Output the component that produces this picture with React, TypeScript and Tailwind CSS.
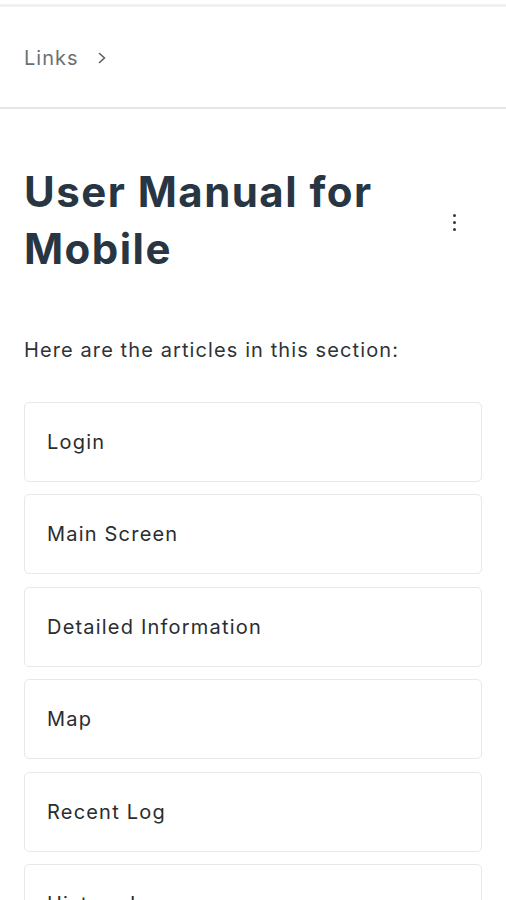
import React from "react";

const items = ["Login", "Main Screen", "Detailed Information", "Map", "Recent Log", "History Log"];

export default function App() {
  return (
    <div className="w-[506px] h-[900px] overflow-hidden bg-white" style={{ fontFamily: "Inter, 'Noto Sans', sans-serif" }}>
      <div className="h-[8px] pt-[4px]">
        <div className="h-[3px] bg-[#f1f1f1]" />
      </div>
      <div className="h-[101px] flex items-center px-6 border-b-2 border-[#e6e6e6]">
        <span className="text-[20px] tracking-[0.05em] text-[#6b7075]">Links</span>
        <svg className="ml-[17px] mt-[1px]" width="12" height="14" viewBox="0 0 12 14" fill="none">
          <path d="M3.5 2.5L8.5 7L3.5 11.5" stroke="#5a5f64" strokeWidth="1.6" strokeLinecap="round" strokeLinejoin="round" />
        </svg>
      </div>
      <div className="px-6 pt-[54px]">
        <div className="flex items-center justify-between">
          <h1 className="text-[42px] leading-[57px] font-bold text-[#283643] tracking-[0.035em]">
            User Manual for
            <br />
            Mobile
          </h1>
          <div className="flex flex-col gap-[4px] mr-[26px] mt-[4px]">
            <span className="w-[3px] h-[3px] rounded-full bg-[#2f3a44]" />
            <span className="w-[3px] h-[3px] rounded-full bg-[#2f3a44]" />
            <span className="w-[3px] h-[3px] rounded-full bg-[#2f3a44]" />
          </div>
        </div>
        <p className="mt-[59px] text-[20px] leading-[28px] tracking-[0.055em] text-[#2f3337]">Here are the articles in this section:</p>
        <div className="mt-[38px] flex flex-col gap-[12.4px]">
          {items.map((t) => (
            <div key={t} className="h-[80px] shrink-0 flex items-center px-[22px] border border-[#e8e8e8] rounded-[5px] text-[20px] tracking-[0.06em] text-[#2a2d30]">
              {t}
            </div>
          ))}
        </div>
      </div>
    </div>
  );
}
